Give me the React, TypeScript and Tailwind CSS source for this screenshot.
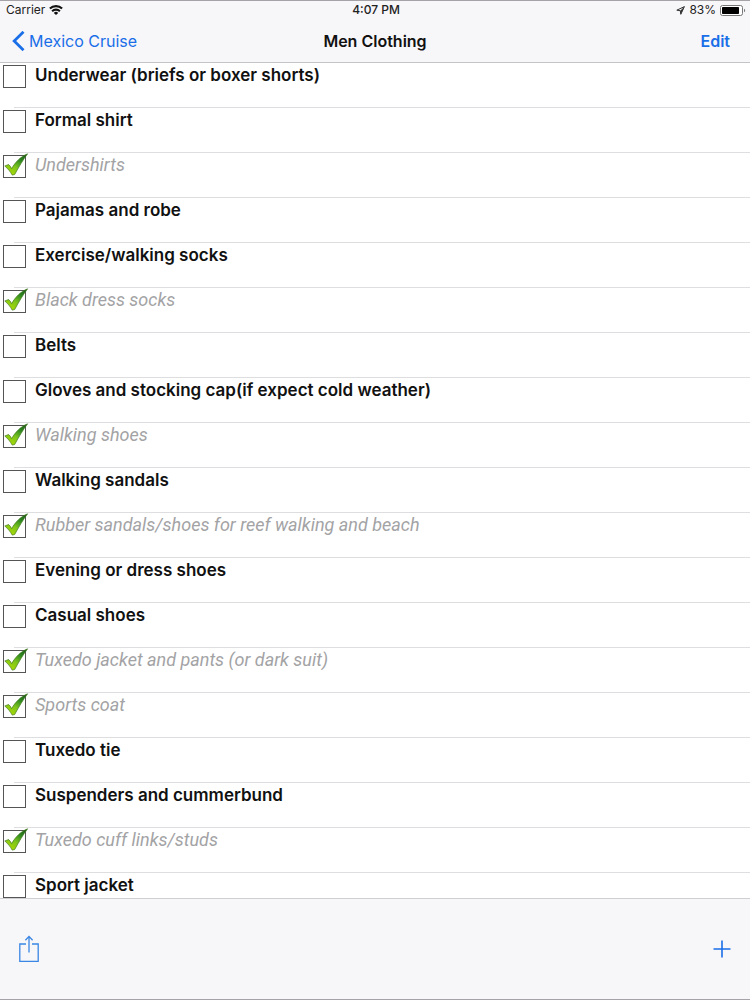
import React, { useState } from 'react';

interface PackingItem {
    id: string;
    name: string;
    packed: boolean;
}

const initialItems: PackingItem[] = [
    { id: 'underwear', name: 'Underwear (briefs or boxer shorts)', packed: false },
    { id: 'formal-shirt', name: 'Formal shirt', packed: false },
    { id: 'undershirts', name: 'Undershirts', packed: true },
    { id: 'pajamas', name: 'Pajamas and robe', packed: false },
    { id: 'exercise-socks', name: 'Exercise/walking socks', packed: false },
    { id: 'dress-socks', name: 'Black dress socks', packed: true },
    { id: 'belts', name: 'Belts', packed: false },
    { id: 'gloves', name: 'Gloves and stocking cap(if expect cold weather)', packed: false },
    { id: 'walking-shoes', name: 'Walking shoes', packed: true },
    { id: 'walking-sandals', name: 'Walking sandals', packed: false },
    { id: 'rubber-sandals', name: 'Rubber sandals/shoes for reef walking and beach', packed: true },
    { id: 'evening-shoes', name: 'Evening or dress shoes', packed: false },
    { id: 'casual-shoes', name: 'Casual shoes', packed: false },
    { id: 'tuxedo-jacket', name: 'Tuxedo jacket and pants (or dark suit)', packed: true },
    { id: 'sports-coat', name: 'Sports coat', packed: true },
    { id: 'tuxedo-tie', name: 'Tuxedo tie', packed: false },
    { id: 'suspenders', name: 'Suspenders and cummerbund', packed: false },
    { id: 'cuff-links', name: 'Tuxedo cuff links/studs', packed: true },
    { id: 'sport-jacket', name: 'Sport jacket', packed: false },
];

// --- Icons ---

const WifiIcon: React.FC = () => (
    <svg width="14" height="10" viewBox="0 0 14 10" fill="none" stroke="#111" strokeWidth="2.1" aria-hidden="true">
        <path d="M0.9 3.6a8.7 8.7 0 0 1 12.2 0" />
        <path d="M3.1 6.2a5.6 5.6 0 0 1 7.8 0" />
        <path d="M7 9.9 4.8 7.9a3 3 0 0 1 4.4 0Z" fill="#111" stroke="none" />
    </svg>
);

const LocationIcon: React.FC = () => (
    <svg width="9" height="9" viewBox="0 0 9 9" fill="none" stroke="#333" strokeLinejoin="round" aria-hidden="true">
        <path d="M8.4 0.6 0.8 4.2l3.5 0.5 0.5 3.6Z" />
        <path d="M8.4 0.6 4.3 4.7l0.5 3.6Z" fill="#333" stroke="none" />
    </svg>
);

const BatteryIcon: React.FC = () => (
    <svg width="26" height="11" viewBox="0 0 26 11" aria-hidden="true">
        <rect x="0.5" y="0.5" width="22" height="10" rx="2" fill="#fff" stroke="#777" />
        <rect x="2" y="2" width="17" height="7" rx="0.8" fill="#000" />
        <path d="M24 3.8c1.6 0.4 1.6 3 0 3.4Z" fill="#777" />
    </svg>
);

const BackIcon: React.FC = () => (
    <svg width="13" height="20" viewBox="0 0 13 20" fill="none" stroke="#1a6fe8" strokeWidth="2.8" aria-hidden="true">
        <path d="M11.5 0.8 2.2 10l9.3 9.2" />
    </svg>
);

const ShareIcon: React.FC = () => (
    <svg width="20" height="28" viewBox="0 0 20 28" fill="none" stroke="#3a86e4" strokeWidth="1.3" aria-hidden="true">
        <path d="M7 9H0.8v17.3h18.4V9H13" />
        <path d="M10 17.5V1.5M6.4 5.2 10 1.4l3.6 3.8" />
    </svg>
);

const PlusIcon: React.FC = () => (
    <svg width="18" height="18" viewBox="0 0 18 18" fill="none" stroke="#1a6fe8" strokeWidth="1.6" aria-hidden="true">
        <path d="M9 0.5v17M0.5 9h17" />
    </svg>
);

// Shared gradient, kept outside the rows so a hidden check mark can't hide it
const CheckGradient: React.FC = () => (
    <svg className="absolute" width="0" height="0" aria-hidden="true">
        <defs>
            <linearGradient id="check-fill" x1="0.2" y1="1" x2="0.85" y2="0">
                <stop offset="0" stopColor="#b0dc00" />
                <stop offset="0.4" stopColor="#7cc41c" />
                <stop offset="0.7" stopColor="#2f8a20" />
                <stop offset="1" stopColor="#1c5c18" />
            </linearGradient>
        </defs>
    </svg>
);

const CheckMark: React.FC = () => (
    <svg
        className="pointer-events-none absolute bottom-0 left-0 hidden peer-checked:block"
        width="26"
        height="25"
        viewBox="0 0 26 25"
        aria-hidden="true"
    >
        <path
            d="M1.8 13 5.6 11.500c1.400 1.100 2.300 2.500 3 4.100C12.300 9.400 17.200 3.800 24.600 0.800c-4.900 6.400-8.900 13.400-12.900 20.700l-2.500 0.600C7.400 18.700 5 15.700 1.800 13Z"
            fill="url(#check-fill)"
            stroke="#3f7a1c"
            strokeWidth="0.7"
            strokeLinejoin="round"
        />
    </svg>
);

// --- Rows ---

interface ItemRowProps {
    item: PackingItem;
    onToggle: (id: string) => void;
}

const ItemRow: React.FC<ItemRowProps> = ({ item, onToggle }) => (
    <li className="flex h-[45px] shrink-0">
        <div className="relative z-10 mt-0.5 ml-[3px] h-[23px] w-[23px]">
            <input
                id={item.id}
                type="checkbox"
                checked={item.packed}
                onChange={() => onToggle(item.id)}
                className="peer block h-[23px] w-[23px] appearance-none border border-[#555] bg-white"
            />
            <CheckMark />
        </div>
        {/* Divider is inset, so it starts under the checkbox */}
        <div className="-ml-3 flex-1 border-b border-[#dedee0] pl-[21px]">
            <label
                htmlFor={item.id}
                className={`block leading-6 ${item.packed ? "font-['Roboto','Liberation_Sans',sans-serif] text-[18px] italic text-[#a3a3a5]" : 'text-[17px] font-semibold text-[#111]'}`}
            >
                {item.name}
            </label>
        </div>
    </li>
);

const App: React.FC = () => {
    const [items, setItems] = useState<PackingItem[]>(initialItems);

    const handleToggle = (id: string) => {
        setItems(prev => prev.map(item => (item.id === id ? { ...item, packed: !item.packed } : item)));
    };

    return (
        <div className="flex h-screen flex-col border-y border-[#a5a3a8] bg-white font-['Inter','Liberation_Sans',sans-serif]">
            <CheckGradient />
            <header className="shrink-0 border-b border-[#c4c3c8] bg-[#f7f6f9]">
                <div className="grid h-[18px] grid-cols-3 items-center pr-1 pl-1.5 text-[12px] leading-4 text-[#222]">
                    <div className="flex items-center gap-1">
                        <span>Carrier</span>
                        <WifiIcon />
                    </div>
                    <div className="text-center font-medium">4:07 PM</div>
                    <div className="flex items-center justify-end gap-1">
                        <LocationIcon />
                        <span>83%</span>
                        <BatteryIcon />
                    </div>
                </div>
                <nav className="grid h-[43px] grid-cols-3 items-center px-3 text-[16px] leading-6">
                    <a href="#lists" className="flex items-center gap-1 text-[#1a6fe8]">
                        <BackIcon />
                        Mexico Cruise
                    </a>
                    <h1 className="text-center font-semibold text-[#111]">Men Clothing</h1>
                    <button type="button" className="mr-2 justify-self-end font-semibold text-[#1a6fe8]">
                        Edit
                    </button>
                </nav>
            </header>

            <main className="min-h-0 flex-1 overflow-y-auto [scrollbar-width:none]">
                <ul className="flex flex-col">
                    {items.map(item => (
                        <ItemRow key={item.id} item={item} onToggle={handleToggle} />
                    ))}
                </ul>
            </main>

            <footer className="flex h-[101px] shrink-0 items-center justify-between border-t border-[#cfced3] bg-[#f7f6f9] px-[19px]">
                <button type="button" aria-label="Share">
                    <ShareIcon />
                </button>
                <button type="button" aria-label="Add item">
                    <PlusIcon />
                </button>
            </footer>
        </div>
    );
};

export default App;
